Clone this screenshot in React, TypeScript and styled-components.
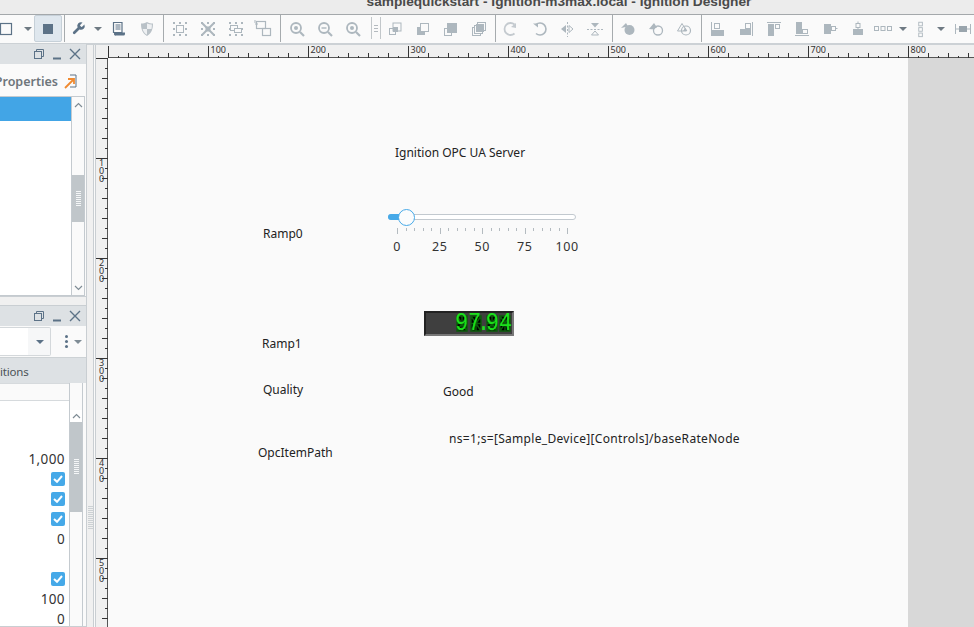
import React from "react";
import styled, { createGlobalStyle } from "styled-components";

const GREY = "#adb7be";
const SLATE = "#5c7287";
const FONT = `"Noto Sans", "Open Sans", sans-serif`;

const GlobalStyle = createGlobalStyle`
  html, body {
    margin: 0;
    height: 100%;
    overflow: hidden;
    background: #f0f0f0;
    font-family: ${FONT};
  }
`;

const Page = styled.div`
  width: 974px;
  height: 627px;
  display: flex;
  flex-direction: column;
  overflow: hidden;
`;

const TitleBar = styled.div`
  height: 14px;
  flex: none;
  background: #ececec;
  border-bottom: 1px solid #a4a8ab;
  overflow: hidden;
  display: flex;
  justify-content: center;
  align-items: flex-end;
  padding-left: 144px;
  font: bold 13.7px "Liberation Sans", Arial, sans-serif;
  line-height: 14px;
  color: #4a4a4a;
  box-sizing: content-box;
  span {
    white-space: nowrap;
    position: relative;
    top: -5px;
    line-height: 14px;
  }
`;

const Toolbar = styled.div`
  height: 27px;
  flex: none;
  display: flex;
  align-items: stretch;
  background: #fafafa;
  margin-left: -7px;
  width: 981px;
  padding-bottom: 1px;
  border-bottom: 2px solid #ccd1d5;
`;

const ToolButton = styled.div<{ $w?: number; $active?: boolean; $after?: number }>`
  width: ${(p) => p.$w ?? 28}px;
  margin-right: ${(p) => p.$after ?? 0}px;
  flex: none;
  box-sizing: border-box;
  display: flex;
  align-items: center;
  justify-content: center;
  ${(p) => p.$active && `background: #dfe7ee; border: 1px solid #c6d0d8; border-radius: 2px;`}
`;

const Separator = styled.div<{ $l: number; $r: number }>`
  width: 1px;
  flex: none;
  background: #a6abae;
  margin: 0 ${(p) => p.$r}px 0 ${(p) => p.$l}px;
`;

const ToolGrip = styled.div`
  width: 10px;
  margin-left: 4px;
  flex: none;
  box-sizing: border-box;
  margin-top: 2px;
  margin-bottom: 3px;
  border-left: 1px solid #c2c7ca;
  border-right: 1px solid #c2c7ca;
  display: flex;
  align-items: center;
  justify-content: center;
  &::after {
    content: "";
    width: 4px;
    height: 5px;
    border-top: 1px solid #b4babf;
    border-bottom: 1px solid #b4babf;
    background: linear-gradient(#b4babf, #b4babf) center / 100% 1px no-repeat;
  }
`;

const Caret = styled.i<{ $color?: string }>`
  display: block;
  width: 0;
  height: 0;
  border-left: 4px solid transparent;
  border-right: 4px solid transparent;
  border-top: 4px solid ${(p) => p.$color ?? "#6f7a83"};
`;

const Main = styled.div`
  flex: 1;
  min-height: 0;
  display: flex;
`;

const Sidebar = styled.div`
  width: 87px;
  flex: none;
  margin-top: -1px;
  box-sizing: border-box;
  border-right: 1px solid #c9ced2;
  display: flex;
  flex-direction: column;
  background: #fafafa;
`;

const Dock = styled.section<{ $h?: number }>`
  display: flex;
  flex-direction: column;
  ${(p) => (p.$h ? `height: ${p.$h}px; flex: none;` : "flex: 1; min-height: 0;")}
  box-sizing: border-box;
  border-bottom: 1px solid #c9ced2;
`;

const DockGap = styled.div`
  height: 8px;
  flex: none;
  background: #f0f0f0;
  border-bottom: 1px solid #c9ced2;
`;

const DockHeader = styled.header`
  height: 20px;
  flex: none;
  background: #dde1e4;
  display: flex;
  align-items: center;
  justify-content: flex-end;
  gap: 6px;
  padding-right: 5px;
`;

const PropertiesRow = styled.div`
  height: 32px;
  flex: none;
  box-sizing: border-box;
  padding: 2px 8px 0 0;
  display: flex;
  align-items: center;
  justify-content: flex-end;
  gap: 6px;
  font-size: 12.5px;
  font-weight: 600;
  color: #6e767c;
  white-space: nowrap;
  overflow: hidden;
  svg {
    flex: none;
  }
`;

const TreeBox = styled.div`
  flex: 1;
  min-height: 0;
  display: flex;
  margin-right: 1px;
  border-top: 1px solid #c4cacf;
  border-bottom: 1px solid #c4cacf;
  border-right: 1px solid #c4cacf;
  background: #fff;
`;

const TreePane = styled.div`
  flex: 1;
  background: #fff;
`;

const SelectedRow = styled.div`
  height: 24px;
  background: #42a5e6;
`;

const ScrollColumn = styled.div`
  width: 12px;
  flex: none;
  background: #fafafa;
  border-left: 1px solid #c4cacf;
  display: flex;
  flex-direction: column;
  align-items: stretch;
`;

const ScrollArrow = styled.div<{ $h: number; $white?: boolean }>`
  height: ${(p) => p.$h}px;
  flex: none;
  display: flex;
  align-items: center;
  justify-content: center;
  ${(p) => p.$white && "background: #fff;"}
`;

const ScrollSpace = styled.div<{ $h?: number }>`
  ${(p) => (p.$h ? `height: ${p.$h}px; flex: none;` : "flex: 1;")}
`;

const ScrollThumb = styled.div<{ $h: number }>`
  height: ${(p) => p.$h}px;
  flex: none;
  background: #c0c6ca;
  display: flex;
  align-items: center;
  justify-content: center;
  &::after {
    content: "";
    width: 5px;
    height: 16px;
    background: repeating-linear-gradient(#f4f6f7 0 1px, transparent 1px 2px);
  }
`;

const ComboRow = styled.div`
  height: 31px;
  flex: none;
  display: flex;
  align-items: center;
  background: #fafafa;
`;

const Combo = styled.div`
  width: 51px;
  height: 29px;
  flex: none;
  box-sizing: border-box;
  border: 1px solid #d4d8db;
  border-left: 0;
  border-radius: 0 2px 2px 0;
  background: linear-gradient(90deg, #fff 0 28px, #f6f7f8 28px);
  display: flex;
  align-items: center;
  justify-content: flex-end;
  padding-right: 6px;
`;

const KebabBox = styled.div`
  margin-left: 14px;
  display: flex;
  align-items: center;
  gap: 6px;
`;

const Kebab = styled.div`
  width: 3px;
  height: 3px;
  border-radius: 50%;
  background: #5c7287;
  box-shadow: 0 5px 0 #5c7287, 0 10px 0 #5c7287;
  margin-top: -10px;
`;

const TabStrip = styled.div`
  height: 26px;
  flex: none;
  background: #dde1e4;
  border-top: 1px solid #cdd2d5;
  display: flex;
  align-items: center;
  box-sizing: border-box;
  padding: 1px 0 0 0;
  font-size: 11.5px;
  letter-spacing: -0.2px;
  color: #4b5257;
  white-space: nowrap;
  overflow: hidden;
`;

const TableWrap = styled.div`
  flex: 1;
  min-height: 0;
  display: flex;
  margin-right: 3px;
  border-right: 1px solid #c4cacf;
`;

const TableBody = styled.div`
  flex: 1;
  display: flex;
  flex-direction: column;
  background: #fff;
`;

const TableHead = styled.div`
  height: 16px;
  flex: none;
  background: #fafafa;
  border-bottom: 1px solid #d6dadd;
  border-top: 1px solid #d6dadd;
`;

const Rows = styled.div`
  flex: 1;
  padding-top: 48px;
  overflow: hidden;
`;

const Row = styled.div`
  height: 20px;
  display: flex;
  align-items: center;
  justify-content: flex-end;
  padding-right: 4px;
  font-size: 13.5px;
  color: #333;
  letter-spacing: 0.4px;
`;

const CheckBox = styled.div`
  width: 14px;
  height: 14px;
  border-radius: 2px;
  background: #46a9e8;
  display: flex;
  align-items: center;
  justify-content: center;
`;

const Grip = styled.div`
  width: 6px;
  flex: none;
  display: flex;
  align-items: center;
  justify-content: center;
  padding-top: 364px;
  box-sizing: border-box;
  background: #f0f0f0;
  &::after {
    content: "";
    width: 5px;
    height: 24px;
    background: repeating-linear-gradient(#ccd1d4 0 1px, transparent 1px 2px);
  }
`;

const Designer = styled.div`
  flex: 1;
  min-width: 0;
  display: flex;
  flex-direction: column;
  border-left: 1px solid #c9ced2;
  background: #fafafa;
`;

const RulerRow = styled.div`
  height: 13px;
  flex: none;
  display: flex;
  background: #f0f0f0;
  overflow: hidden;
`;

const RulerCorner = styled.div`
  width: 13px;
  flex: none;
  margin-left: 1px;
  box-sizing: border-box;
  border-left: 1px solid #c9ced2;
`;

const CanvasRow = styled.div`
  flex: 1;
  min-height: 0;
  display: flex;
`;

const SideRuler = styled.div`
  width: 13px;
  flex: none;
  margin-left: 1px;
  box-sizing: border-box;
  border-left: 1px solid #c9ced2;
  background: #f0f0f0;
`;

const Sheet = styled.div`
  width: 800px;
  flex: none;
  position: relative;
  background: #fafafa;
`;

const Gutter = styled.div`
  flex: 1;
  background: #d8d8d8;
`;

const CanvasLabel = styled.div<{ $x: number; $y: number; $spacing?: number }>`
  position: absolute;
  left: ${(p) => p.$x - 108}px;
  top: ${(p) => p.$y - 58 - 9}px;
  height: 18px;
  line-height: 18px;
  font-size: 12px;
  letter-spacing: ${(p) => p.$spacing ?? 0}px;
  color: #222;
  white-space: nowrap;
`;

const SliderBox = styled.div`
  position: absolute;
  left: ${388 - 108}px;
  top: ${208 - 58}px;
  width: 190px;
`;

const SliderTrack = styled.div`
  position: relative;
  width: 188px;
  height: 6px;
  margin-top: 6px;
  box-sizing: border-box;
  border: 1px solid #c2c9cf;
  border-radius: 3px;
  background: #fff;
`;

const SliderFill = styled.div`
  position: absolute;
  left: -1px;
  top: -1px;
  height: 6px;
  width: 16px;
  border-radius: 3px 0 0 3px;
  background: #46a9e8;
`;

const SliderThumb = styled.div`
  position: absolute;
  left: 9px;
  top: -6px;
  width: 17px;
  height: 17px;
  box-sizing: border-box;
  border: 1.5px solid #46a9e8;
  border-radius: 50%;
  background: #fbfcfd;
`;

const SliderTicks = styled.svg`
  display: block;
  margin-top: 8px;
`;

const SliderLabels = styled.div`
  display: grid;
  grid-template-columns: repeat(5, 42.5px);
  margin: 3px 0 0 -12px;
  font-size: 12.5px;
  line-height: 18px;
  letter-spacing: 0.6px;
  color: #333;
  text-align: center;
`;

const Lcd = styled.div`
  position: absolute;
  left: ${424 - 108}px;
  top: ${311 - 58}px;
  width: 90px;
  height: 25px;
  box-sizing: border-box;
  background: #3f3f3f;
  border-style: solid;
  border-width: 2px;
  border-color: #222 #777 #777 #222;
  overflow: hidden;
`;

const LcdGhost = styled.svg`
  position: absolute;
  left: 30px;
  top: 2px;
`;

const LcdText = styled.div`
  position: absolute;
  right: 0;
  top: -3px;
  font: 26px/27px "Liberation Mono", monospace;
  color: #1be01b;
  transform: scaleX(0.84);
  transform-origin: right center;
  white-space: nowrap;
`;

const LcdDot = styled.span`
  margin: 0 -5px;
`;

const Svg = ({ children, w = 20, h = 20 }: { children: React.ReactNode; w?: number; h?: number }) => (
  <svg width={w} height={h} viewBox={`0 0 ${w} ${h}`} fill="none">
    {children}
  </svg>
);

// four dotted corners used by the group tools
const Corners = () => (
  <g fill={GREY}>
    {[3, 9, 15].map((x) =>
      [3, 9, 15].map((y) =>
        x === 9 && y === 9 ? null : <rect key={`${x}${y}`} x={x} y={y} width="2" height="2" />
      )
    )}
  </g>
);

const Magnifier = ({ mark }: { mark: "plus" | "minus" | "fit" }) => (
  <Svg>
    <circle cx="9" cy="9" r="5" stroke={GREY} strokeWidth="1.8" />
    <path d="M13 13l4 4" stroke={GREY} strokeWidth="2.2" />
    {mark === "plus" && <path d="M6.5 9h5M9 6.5v5" stroke={GREY} strokeWidth="1.4" />}
    {mark === "minus" && <path d="M6.5 9h5" stroke={GREY} strokeWidth="1.4" />}
    {mark === "fit" && <circle cx="9" cy="9" r="2" fill={GREY} />}
  </Svg>
);

const icons: Record<string, React.ReactNode> = {
  frame: (
    <Svg>
      <rect x="3.5" y="4.5" width="11" height="11" stroke={SLATE} strokeWidth="1.2" />
    </Svg>
  ),
  stop: (
    <Svg>
      <rect x="5" y="5" width="10" height="10" fill={SLATE} />
    </Svg>
  ),
  wrench: (
    <svg width="15" height="15" viewBox="0 0 24 24" fill={SLATE}>
      <path d="M14.7 6.3a1 1 0 0 0 0 1.4l1.6 1.6a1 1 0 0 0 1.4 0l3.77-3.77a6 6 0 0 1-7.94 7.94l-6.91 6.91a2.12 2.12 0 0 1-3-3l6.91-6.91a6 6 0 0 1 7.94-7.94l-3.76 3.76z" />
    </svg>
  ),
  script: (
    <Svg>
      <path d="M4.5 3.5h8.5v10H4.5z" stroke={SLATE} strokeWidth="1.2" />
      <path d="M6.5 6h5M6.5 8h5M6.5 10h5" stroke={SLATE} />
      <path d="M6 13.5h10v1.5a1.5 1.5 0 0 1-1.5 1.5H7a1.5 1.5 0 0 1-1-3z" fill={SLATE} />
    </Svg>
  ),
  shield: (
    <Svg>
      <path d="M10 3c2 1.300 4 1.600 6 1.600 0 5-1 9.400-6 12.400-5-3-6-7.400-6-12.400 2 0 4-.3 6-1.600z" fill="#b9c1c7" />
      <path d="M10 4.500v5.500h4.500c.3-1.500.4-2.700.4-4.400-1.800-.1-3.400-.4-4.900-1.100zM10 10H5.600c.6 2.500 2 4.500 4.400 5.700z" fill="#eef0f2" />
    </Svg>
  ),
  group: (
    <Svg>
      <Corners />
      <rect x="6.500" y="6.500" width="7" height="7" stroke={GREY} />
    </Svg>
  ),
  ungroup: (
    <Svg>
      <Corners />
      <path d="M4 4l12 12M16 4L4 16" stroke={GREY} strokeWidth="2" />
      <rect x="7.500" y="7.500" width="5" height="5" fill={GREY} />
    </Svg>
  ),
  layerGroup: (
    <Svg>
      <Corners />
      <rect x="4.500" y="6.500" width="7" height="5" fill="#fafafa" stroke={GREY} />
      <rect x="8.500" y="9.500" width="7" height="4" fill="#fafafa" stroke={GREY} />
    </Svg>
  ),
  cross: (
    <Svg>
      <rect x="2.500" y="2.500" width="9" height="7" stroke={GREY} strokeWidth="1.200" />
      <rect x="8.500" y="9.500" width="8" height="7" stroke={GREY} strokeWidth="1.200" />
      <path d="M1 5h3M1 1v3" stroke={GREY} />
    </Svg>
  ),
  zoomIn: <Magnifier mark="fit" />,
  zoomOut: <Magnifier mark="minus" />,
  zoomFit: <Magnifier mark="fit" />,
  union: (
    <Svg>
      <rect x="4.500" y="9.500" width="6" height="6" fill="#fafafa" stroke={GREY} />
      <rect x="8" y="4" width="8" height="8" fill="#fafafa" stroke={GREY} />
      <rect x="8" y="8" width="5" height="5" fill={GREY} />
      <rect x="4" y="9" width="4" height="1" fill={GREY} />
    </Svg>
  ),
  front: (
    <Svg>
      <rect x="4" y="8" width="8" height="8" fill={GREY} />
      <rect x="7.500" y="4.500" width="8" height="8" fill="#fafafa" stroke={GREY} />
    </Svg>
  ),
  back: (
    <Svg>
      <rect x="3.500" y="9.500" width="7" height="7" fill="#fafafa" stroke={GREY} />
      <rect x="6" y="4" width="10" height="10" fill={GREY} />
    </Svg>
  ),
  stack: (
    <Svg>
      <rect x="3.500" y="8.500" width="8" height="8" fill="#fafafa" stroke={GREY} />
      <rect x="5.500" y="6.500" width="8" height="8" fill="#fafafa" stroke={GREY} />
      <rect x="8.500" y="3.500" width="8" height="8" fill="#fafafa" stroke={GREY} />
      <rect x="7" y="5" width="8" height="8" fill={GREY} />
    </Svg>
  ),
  rotateCw: (
    <Svg>
      <path d="M13.500 5.500a6 6 0 1 0 0 9" stroke="#c4cacf" strokeWidth="1.800" />
      <path d="M10 8l5-4v5z" fill="#c4cacf" />
    </Svg>
  ),
  rotateCcw: (
    <Svg>
      <path d="M7 5.500a6 6 0 1 1 0 9" stroke={GREY} strokeWidth="1.600" />
      <path d="M4 4.500h5v4z" fill={GREY} />
    </Svg>
  ),
  flipH: (
    <Svg>
      <path d="M9 6L4 10l5 4z" fill={GREY} />
      <path d="M12 6.500l4 3.500-4 3.500z" stroke={GREY} />
      <path d="M10.500 3v15" stroke={GREY} strokeDasharray="2 1.500" />
    </Svg>
  ),
  flipV: (
    <Svg>
      <path d="M6 4h8l-4 4.500z" fill={GREY} />
      <path d="M6.500 16h7l-3.500-4z" stroke={GREY} />
      <path d="M2 10.500h16" stroke={GREY} strokeDasharray="2 1.500" />
    </Svg>
  ),
  shapeUnion: (
    <Svg>
      <path d="M3 9l5-5 2 3.500z" fill={GREY} />
      <circle cx="11.500" cy="11" r="5" fill={GREY} />
    </Svg>
  ),
  shapeDiff: (
    <Svg>
      <path d="M3 10l5-6 3 4.500a5 5 0 0 0-3 2z" fill={GREY} />
      <circle cx="12" cy="11.500" r="4.500" stroke={GREY} strokeWidth="1.300" />
    </Svg>
  ),
  shapeCut: (
    <Svg>
      <path d="M3.500 12L8 4.500l4.500 7.500z" stroke={GREY} />
      <circle cx="12" cy="11.500" r="4.500" stroke={GREY} strokeWidth="1.200" />
      <path d="M9 12l2.300-3.500 2 3.500z" fill={GREY} />
    </Svg>
  ),
  alignLeft: (
    <Svg>
      <path d="M3.500 3v14" stroke={GREY} />
      <rect x="6.500" y="4.500" width="5" height="5" stroke={GREY} />
      <rect x="4" y="11" width="12" height="6" fill={GREY} />
    </Svg>
  ),
  alignRight: (
    <Svg>
      <path d="M16.500 3v14" stroke={GREY} />
      <rect x="9.500" y="4.500" width="5" height="5" stroke={GREY} />
      <rect x="4" y="10" width="11" height="6" fill={GREY} />
    </Svg>
  ),
  alignTop: (
    <Svg>
      <path d="M3 3.500h14" stroke={GREY} />
      <rect x="4" y="5" width="6" height="12" fill={GREY} />
      <rect x="11.500" y="5.500" width="4" height="4" stroke={GREY} />
    </Svg>
  ),
  alignBottom: (
    <Svg>
      <path d="M3 16.500h14" stroke={GREY} />
      <rect x="4" y="3" width="6" height="12" fill={GREY} />
      <rect x="10.500" y="10.500" width="5" height="4" stroke={GREY} />
    </Svg>
  ),
  alignMiddle: (
    <Svg>
      <rect x="4" y="5" width="7" height="10" fill={GREY} />
      <rect x="11.500" y="7.500" width="4" height="4" stroke={GREY} />
      <path d="M15.500 9.500h2" stroke={GREY} />
    </Svg>
  ),
  alignCenter: (
    <Svg>
      <rect x="8" y="4.500" width="4" height="4" stroke={GREY} />
      <path d="M10 2.500v2M10 8.500v2" stroke={GREY} />
      <rect x="5" y="10" width="10" height="6" fill={GREY} />
    </Svg>
  ),
  rowBoxes: (
    <Svg>
      <rect x="1.500" y="7.500" width="4" height="4" stroke={GREY} />
      <rect x="8" y="7.500" width="4" height="4" stroke={GREY} />
      <rect x="14.500" y="7.500" width="4" height="4" stroke={GREY} />
    </Svg>
  ),
  colBoxes: (
    <Svg>
      <rect x="7.500" y="2.500" width="4" height="4" stroke={GREY} />
      <rect x="7.500" y="8.500" width="4" height="4" stroke={GREY} />
      <rect x="7.500" y="14.500" width="4" height="4" stroke={GREY} />
    </Svg>
  ),
  spread: (
    <Svg>
      <path d="M2.500 5v10M17.500 5v10M3 10h14" stroke={GREY} />
      <rect x="6" y="7" width="8" height="6" fill="#9aa5ad" />
    </Svg>
  ),
};

const tool = (name: string, after?: number, w?: number) => (
  <ToolButton key={name + (after ?? "")} $after={after} $w={w}>
    {icons[name]}
  </ToolButton>
);

const caret = (w: number, key: string) => (
  <ToolButton key={key} $w={w}>
    <Caret />
  </ToolButton>
);

const RestoreIcon = () => (
  <Svg w={12} h={12}>
    <rect x="1.500" y="3.500" width="7" height="7" stroke={SLATE} />
    <path d="M3.500 3V1.500h7v7H9" stroke={SLATE} />
  </Svg>
);

const MinimizeIcon = () => (
  <Svg w={12} h={12}>
    <path d="M2 10.500h8" stroke={SLATE} strokeWidth="2" />
  </Svg>
);

const CloseIcon = () => (
  <Svg w={12} h={12}>
    <path d="M1 1l10 10M11 1L1 11" stroke={SLATE} strokeWidth="1.400" />
  </Svg>
);

const DockButtons = () => (
  <>
    <RestoreIcon />
    <MinimizeIcon />
    <CloseIcon />
  </>
);

const ChevronUp = () => (
  <Svg w={9} h={6}>
    <path d="M1 5l3.500-3.500L8 5" stroke="#7f8c95" strokeWidth="1.200" />
  </Svg>
);

const ChevronDown = () => (
  <Svg w={9} h={6}>
    <path d="M1 1l3.500 3.500L8 1" stroke="#7f8c95" strokeWidth="1.200" />
  </Svg>
);

const Check = () => (
  <CheckBox>
    <Svg w={10} h={8}>
      <path d="M1 4l3 2.800L9 1" stroke="#fff" strokeWidth="2" />
    </Svg>
  </CheckBox>
);

const TopRuler = () => {
  const w = 866;
  const ticks = [];
  for (let v = 0; v <= w; v += 10) {
    const x = v + 0.5;
    if (v % 100 === 0) {
      ticks.push(<path key={v} d={`M${x} 1V13`} stroke="#333" />);
      if (v > 0)
        ticks.push(
          <text key={`t${v}`} x={x + 2} y={8} fontSize="9" fill="#333" fontFamily={FONT}>
            {v}
          </text>
        );
    } else {
      const top = v % 20 === 0 ? 8 : 11;
      ticks.push(<path key={v} d={`M${x} ${top}V13`} stroke="#333" />);
    }
  }
  return (
    <svg width={w} height={13}>
      <path d="M-1 12.500H866" stroke="#555" />
      {ticks}
    </svg>
  );
};

const LeftRuler = () => {
  const h = 570;
  const ticks = [];
  for (let v = 0; v <= h; v += 10) {
    const y = v + 0.5;
    if (v % 100 === 0) {
      ticks.push(<path key={v} d={`M0 ${y}H12`} stroke="#333" />);
      if (v > 0)
        String(v)
          .split("")
          .forEach((ch, i) => {
            ticks.push(
              <text key={`t${v}${i}`} x={3} y={v + 8 + i * 8} fontSize="9" fill="#333" fontFamily={FONT}>
                {ch}
              </text>
            );
          });
    } else {
      const left = v % 20 === 0 ? 6 : 9;
      ticks.push(<path key={v} d={`M${left} ${y}H12`} stroke="#333" />);
    }
  }
  return (
    <svg width={12} height={h} style={{ display: "block" }}>
      <path d="M11.500 0V570" stroke="#555" />
      {ticks}
    </svg>
  );
};

const Ticks = () => {
  const items = [];
  for (let i = 0; i <= 20; i++) {
    const x = Math.round(9 + i * 8.5) + 0.5;
    items.push(<path key={i} d={`M${x} 0V${i % 5 === 0 ? 6 : 3}`} stroke="#b4bbc0" />);
  }
  return (
    <SliderTicks width={190} height={7}>
      {items}
    </SliderTicks>
  );
};

// ghost segments behind each lcd digit
const LcdSegments = () => (
  <LcdGhost width={56} height={19}>
    {[0, 14, 30, 43].map((x) => (
      <path
        key={x}
        transform={`translate(${x} 0)`}
        d="M1 1h10v15H1zM1 8.500h10M6 1v15M1 1l10 15M11 1L1 16"
        stroke="#0b5c0b"
        strokeWidth="1.400"
      />
    ))}
  </LcdGhost>
);

export default function App() {
  return (
    <Page>
      <GlobalStyle />
      <TitleBar>
        <span>samplequickstart - Ignition-m3max.local - Ignition Designer</span>
      </TitleBar>
      <Toolbar>
        {tool("frame")}
        {caret(13, "c1")}
        <ToolButton $active>{icons.stop}</ToolButton>
        <Separator $l={2} $r={0} />
        {tool("wrench", 0, 26)}
        {caret(14, "c2")}
        {tool("script")}
        {tool("shield")}
        <Separator $l={2} $r={2} />
        {tool("group")}
        {tool("ungroup")}
        {tool("layerGroup")}
        {tool("cross")}
        <Separator $l={2} $r={2} />
        {tool("zoomIn")}
        {tool("zoomOut")}
        {tool("zoomFit")}
        <ToolGrip />
        {tool("union")}
        {tool("front")}
        {tool("back")}
        {tool("stack")}
        <Separator $l={2} $r={1} />
        {tool("rotateCw")}
        {tool("rotateCcw")}
        {tool("flipH")}
        {tool("flipV")}
        <Separator $l={3} $r={1} />
        {tool("shapeUnion")}
        {tool("shapeDiff")}
        {tool("shapeCut")}
        <Separator $l={3} $r={2} />
        {tool("alignLeft")}
        {tool("alignRight")}
        {tool("alignTop")}
        {tool("alignBottom")}
        {tool("alignMiddle")}
        {tool("alignCenter")}
        {tool("rowBoxes", 0, 22)}
        {caret(18, "c3")}
        {tool("colBoxes", 0, 18)}
        {caret(22, "c4")}
        {tool("spread", 0, 22)}
      </Toolbar>
      <Main>
        <Sidebar>
          <Dock $h={253}>
            <DockHeader>
              <DockButtons />
            </DockHeader>
            <PropertiesRow>
              Properties
              <Svg w={14} h={16}>
                <path d="M6 2h6v12H6" stroke={SLATE} />
                <path d="M1 15l8-8M4 6h6v5" stroke="#f08a30" strokeWidth="1.800" />
              </Svg>
            </PropertiesRow>
            <TreeBox>
              <TreePane>
                <SelectedRow />
              </TreePane>
              <ScrollColumn>
                <ScrollArrow $h={16}>
                  <ChevronUp />
                </ScrollArrow>
                <ScrollSpace $h={62} />
                <ScrollThumb $h={47} />
                <ScrollSpace />
                <ScrollArrow $h={14}>
                  <ChevronDown />
                </ScrollArrow>
              </ScrollColumn>
            </TreeBox>
          </Dock>
          <DockGap />
          <Dock>
            <DockHeader>
              <DockButtons />
            </DockHeader>
            <ComboRow>
              <Combo>
                <Caret $color="#5c7287" />
              </Combo>
              <KebabBox>
                <Kebab />
                <Caret $color="#7f8c95" />
              </KebabBox>
            </ComboRow>
            <TabStrip>itions</TabStrip>
            <TableWrap>
              <TableBody>
                <TableHead />
                <Rows>
                  <Row>1,000</Row>
                  <Row>
                    <Check />
                  </Row>
                  <Row>
                    <Check />
                  </Row>
                  <Row>
                    <Check />
                  </Row>
                  <Row>0</Row>
                  <Row />
                  <Row>
                    <Check />
                  </Row>
                  <Row>100</Row>
                  <Row>0</Row>
                </Rows>
              </TableBody>
              <ScrollColumn>
                <ScrollSpace $h={27} />
                <ScrollArrow $h={12} $white>
                  <ChevronUp />
                </ScrollArrow>
                <ScrollThumb $h={90} />
                <ScrollSpace />
              </ScrollColumn>
            </TableWrap>
          </Dock>
        </Sidebar>
        <Grip />
        <Designer>
          <RulerRow>
            <RulerCorner />
            <TopRuler />
          </RulerRow>
          <CanvasRow>
            <SideRuler>
              <LeftRuler />
            </SideRuler>
            <Sheet>
              <CanvasLabel $x={395} $y={153}>Ignition OPC UA Server</CanvasLabel>
              <CanvasLabel $x={263} $y={234}>Ramp0</CanvasLabel>
              <SliderBox>
                <SliderTrack>
                  <SliderFill />
                  <SliderThumb />
                </SliderTrack>
                <Ticks />
                <SliderLabels>
                  <span>0</span>
                  <span>25</span>
                  <span>50</span>
                  <span>75</span>
                  <span>100</span>
                </SliderLabels>
              </SliderBox>
              <Lcd>
                <LcdSegments />
                <LcdText>
                  97<LcdDot>.</LcdDot>94
                </LcdText>
              </Lcd>
              <CanvasLabel $x={262} $y={344}>Ramp1</CanvasLabel>
              <CanvasLabel $x={263} $y={390}>Quality</CanvasLabel>
              <CanvasLabel $x={443} $y={392}>Good</CanvasLabel>
              <CanvasLabel $x={449} $y={439} $spacing={0.31}>
                ns=1;s=[Sample_Device][Controls]/baseRateNode
              </CanvasLabel>
              <CanvasLabel $x={258} $y={453}>OpcItemPath</CanvasLabel>
            </Sheet>
            <Gutter />
          </CanvasRow>
        </Designer>
      </Main>
    </Page>
  );
}
